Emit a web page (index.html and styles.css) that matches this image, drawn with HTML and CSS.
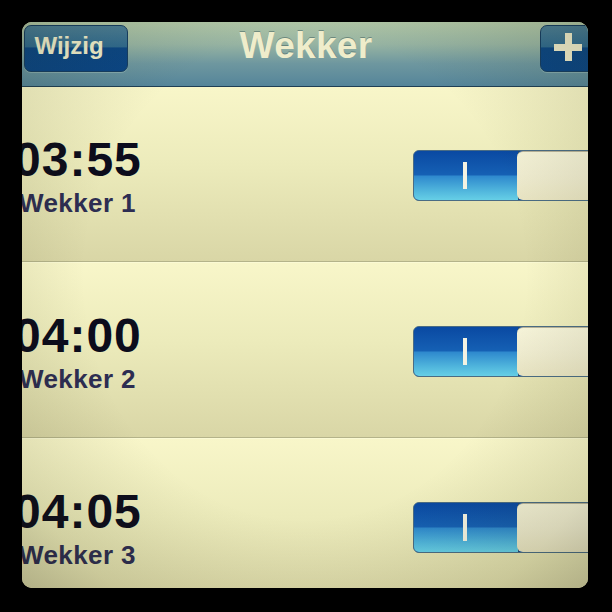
FILE: index.html
```html
<!DOCTYPE html>
<html>
<head>
<meta charset="utf-8">
<link rel="stylesheet" href="styles.css">
</head>
<body>
<div class="screen">
  <header class="navbar">
    <div class="nav-left"><div class="btn btn-edit"><span>Wijzig</span></div></div>
    <div class="title">Wekker</div>
    <div class="nav-right"><div class="btn btn-add"><span class="plus"></span></div></div>
  </header>
  <div class="list">
    <div class="row">
      <div class="info">
        <div class="time">03:55</div>
        <div class="label">Wekker 1</div>
      </div>
      <div class="toggle"><div class="on"><span class="bar"></span></div><div class="knob"></div></div>
    </div>
    <div class="row">
      <div class="info">
        <div class="time">04:00</div>
        <div class="label">Wekker 2</div>
      </div>
      <div class="toggle"><div class="on"><span class="bar"></span></div><div class="knob"></div></div>
    </div>
    <div class="row">
      <div class="info">
        <div class="time">04:05</div>
        <div class="label">Wekker 3</div>
      </div>
      <div class="toggle"><div class="on"><span class="bar"></span></div><div class="knob"></div></div>
    </div>
  </div>
  <div class="vignette"></div>
</div>
</body>
</html>
```
FILE: styles.css
```css
html, body {
  margin: 0;
  padding: 0;
  background: #000;
  width: 612px;
  height: 612px;
  overflow: hidden;
}
body {
  padding: 22px 24px 24px 22px;
  box-sizing: border-box;
  font-family: "Liberation Sans", Arial, sans-serif;
}
.screen {
  position: relative;
  width: 566px;
  height: 566px;
  border-radius: 10px;
  overflow: hidden;
  background: #dcd9a8;
}
.navbar {
  height: 65px;
  border-bottom: 1px solid #1f3f55;
  background: linear-gradient(to bottom, #b0c6a6 0%, #96b3a2 35%, #6e979f 65%, #55859a 100%);
  display: grid;
  grid-template-columns: 1fr auto 1fr;
  align-items: start;
  padding: 3px 0 0 2px;
  box-sizing: border-box;
}
.nav-left {
  display: flex;
  justify-content: flex-start;
}
.nav-right {
  display: flex;
  justify-content: flex-end;
}
.btn {
  height: 47px;
  border: 1px solid #153d62;
  border-radius: 7px;
  background: linear-gradient(to bottom, #4b7d95 0%, #2f6a8f 46%, #0b4684 49%, #0a4585 100%);
  display: flex;
  align-items: center;
  justify-content: center;
  box-sizing: border-box;
  box-shadow: 0 1px 0 rgba(190, 215, 200, 0.35);
}
.btn-edit {
  width: 104px;
  color: #eeedcc;
  font-weight: bold;
  font-size: 24px;
  padding-bottom: 6px;
  padding-right: 14px;
}
.btn-add {
  width: 60px;
  margin-right: -12px;
  border-top-right-radius: 0;
}
.plus {
  position: relative;
  width: 28px;
  height: 28px;
  margin-left: -4px;
  margin-bottom: 3px;
}
.plus::before, .plus::after {
  content: "";
  position: absolute;
  background: #efeccc;
}
.plus::before {
  left: 0;
  top: 11px;
  width: 28px;
  height: 7px;
}
.plus::after {
  left: 11px;
  top: 0;
  width: 7px;
  height: 28px;
}
.title {
  color: #efedcb;
  font-weight: bold;
  font-size: 37px;
  line-height: 1;
  margin-top: 2px;
  letter-spacing: 0.3px;
  text-shadow: 0 -1px 0 rgba(60, 90, 90, 0.5);
}
.list {
  display: flex;
  flex-direction: column;
}
.row {
  height: 175px;
  border-bottom: 1px solid #b4b38a;
  box-sizing: border-box;
  background: linear-gradient(to bottom, #f8f6c9 0%, #ecebbb 45%, #d9d6a6 100%);
  display: flex;
  align-items: center;
  justify-content: space-between;
  padding-top: 2px;
}
.row + .row {
  height: 176px;
  border-top: 1px solid #fbfad4;
}
.info {
  display: flex;
  flex-direction: column;
  margin-top: 5px;
}
.time {
  font-weight: bold;
  font-size: 48px;
  line-height: 44px;
  color: #0c0c1c;
  margin-left: -8px;
  letter-spacing: 1px;
}
.label {
  font-weight: bold;
  font-size: 26px;
  line-height: 30px;
  color: #2d2d52;
  margin-left: -3px;
  margin-top: 6px;
  letter-spacing: 0.4px;
}
.toggle {
  width: 200px;
  height: 51px;
  margin-right: -25px;
  display: flex;
  border-radius: 6px;
  overflow: hidden;
  border: 1px solid #4a6c84;
  box-sizing: border-box;
  background: #0d4ea6;
}
.on {
  width: 104px;
  flex: none;
  display: flex;
  align-items: center;
  justify-content: center;
  background: linear-gradient(to bottom, #0a49a2 0%, #1560b4 48%, #2f8ace 52%, #4fb4dc 80%, #66cfe6 100%);
  border-right: 1px solid #244a70;
}
.bar {
  width: 4px;
  height: 27px;
  background: #f4f3e2;
  margin-left: -2px;
}
.knob {
  flex: 1;
  border-radius: 6px 0 0 6px;
  background: linear-gradient(to bottom, #f5f3d8 0%, #efecd0 50%, #e8e4c2 100%);
  border-top: 1px solid #b8b39a;
  margin-left: -2px;
}
.vignette {
  position: absolute;
  left: 0;
  top: 0;
  right: 0;
  bottom: 0;
  pointer-events: none;
  background: radial-gradient(ellipse at 50% 45%, rgba(0,0,0,0) 55%, rgba(40,40,0,0.12) 85%, rgba(20,20,0,0.22) 100%);
}
```
